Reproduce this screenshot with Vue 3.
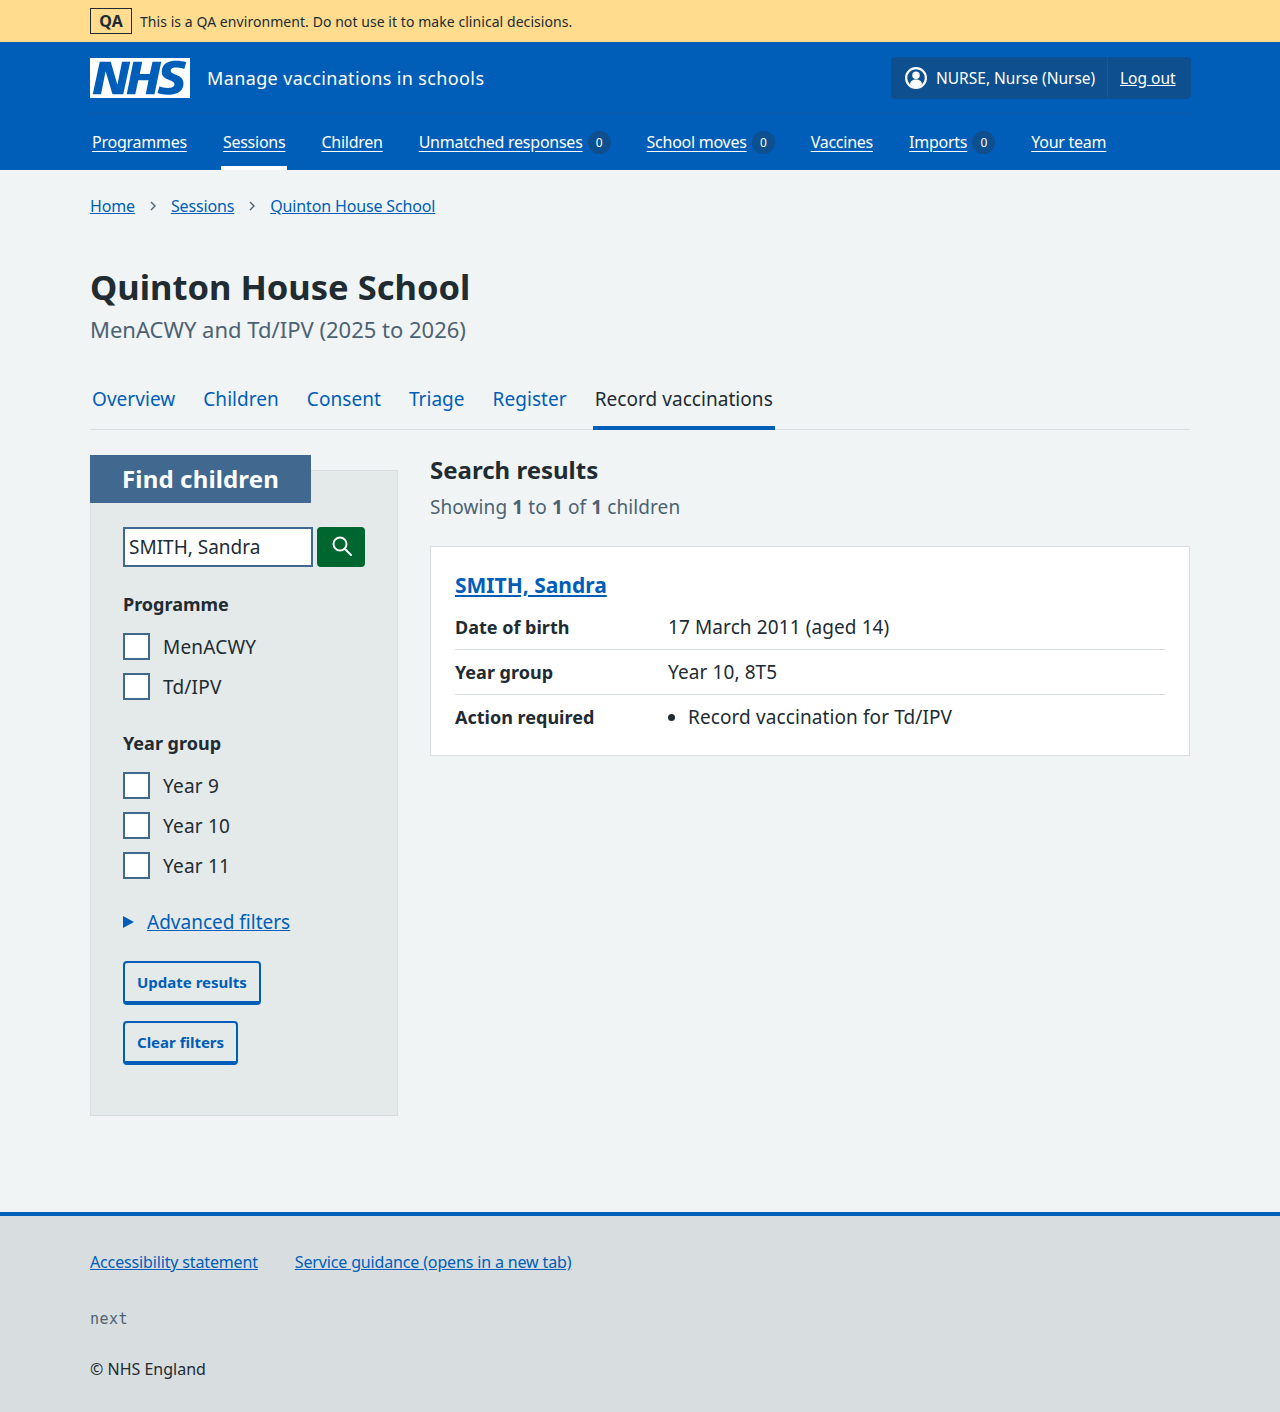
<template>
  <div class="qa-bar">
    <div class="wrap qa-inner">
      <strong class="qa-tag">QA</strong>
      <span>This is a QA environment. Do not use it to make clinical decisions.</span>
    </div>
  </div>

  <header class="header">
    <div class="wrap">
      <div class="header-top">
        <a class="logo-link" href="#">
          <svg class="logo" viewBox="0 0 40 16" aria-label="NHS">
            <path fill="#fff" d="M0 0h40v16H0z" />
            <path fill="#005eb8" d="M3.9 1.5h4.4l2.6 9h.1l1.8-9h3.3l-2.8 13H9l-2.7-9h-.1l-1.8 9H1.1M17.3 1.5h3.6l-1 4.9h4L25 1.5h3.5l-2.7 13h-3.5l1.1-5.6h-4.1l-1.2 5.6h-3.4M37.7 4.4c-.7-.3-1.6-.6-2.9-.6-1.4 0-2.5.2-2.5 1.3 0 1.8 5.1 1.2 5.1 5.1 0 3.6-3.3 4.5-6.4 4.5-1.3 0-2.9-.3-4-.7l.8-2.7c.7.4 2.1.7 3.2.7s2.8-.2 2.8-1.5c0-2.1-5.1-1.3-5.1-5 0-3.4 2.9-4.4 5.8-4.4 1.6 0 3.1.2 4 .6" />
          </svg>
          <span class="service">Manage vaccinations in schools</span>
        </a>
        <div class="account">
          <div class="account-user">
            <svg class="user-icon" viewBox="0 0 20 20">
              <circle cx="10" cy="10" r="9" fill="none" stroke="#fff" stroke-width="2" />
              <circle cx="10" cy="7.6" r="3.4" fill="#fff" />
              <path fill="#fff" d="M4.6 16c0-3.200 2.400-4.600 5.400-4.600s5.400 1.400 5.400 4.600c-1.400 1.500-3.300 2.400-5.400 2.400S6 17.500 4.600 16z" />
            </svg>
            <span>NURSE, Nurse (Nurse)</span>
          </div>
          <a class="logout" href="#">Log out</a>
        </div>
      </div>
      <nav class="main-nav">
        <a v-for="item in navItems" :key="item.label" href="#" class="nav-item" :class="{ current: item.current }">
          <span class="nav-label">{{ item.label }}</span>
          <span v-if="item.count !== undefined" class="count">{{ item.count }}</span>
        </a>
      </nav>
    </div>
  </header>

  <div class="wrap">
    <nav class="breadcrumb">
      <template v-for="(crumb, i) in crumbs" :key="crumb">
        <a href="#">{{ crumb }}</a>
        <svg v-if="i < crumbs.length - 1" class="chevron" viewBox="0 0 8 12">
          <path d="M2 2l4 4-4 4" fill="none" stroke="#4c6272" stroke-width="1.400" />
        </svg>
      </template>
    </nav>

    <main>
      <h1 class="title">Quinton House School</h1>
      <p class="subtitle">MenACWY and Td/IPV (2025 to 2026)</p>

      <div class="tabs">
        <a v-for="tab in tabs" :key="tab" href="#" class="tab" :class="{ active: tab === 'Record vaccinations' }">{{ tab }}</a>
      </div>

      <div class="columns">
        <aside class="filters">
          <h2 class="filters-head">Find children</h2>
          <div class="filters-body">
            <div class="search">
              <input class="search-input" type="text" value="SMITH, Sandra" />
              <button class="search-btn" aria-label="Search">
                <svg viewBox="0 0 20 20" width="20" height="20">
                  <circle cx="8" cy="8" r="6.500" fill="none" stroke="#fff" stroke-width="2" />
                  <path d="M13 13l6 6" fill="none" stroke="#fff" stroke-width="2" stroke-linecap="round" />
                </svg>
              </button>
            </div>

            <fieldset v-for="group in groups" :key="group.legend" class="group">
              <legend class="legend">{{ group.legend }}</legend>
              <label v-for="opt in group.options" :key="opt" class="check">
                <span class="box"></span>
                <span>{{ opt }}</span>
              </label>
            </fieldset>

            <div class="advanced">
              <span class="triangle"></span>
              <a href="#">Advanced filters</a>
            </div>

            <button class="btn">Update results</button>
            <button class="btn">Clear filters</button>
          </div>
        </aside>

        <section class="results">
          <h2 class="results-head">Search results</h2>
          <p class="showing">Showing <b>1</b> to <b>1</b> of <b>1</b> children</p>
          <div class="card">
            <h3 class="card-title"><a href="#">SMITH, Sandra</a></h3>
            <dl class="rows">
              <div class="row">
                <dt>Date of birth</dt>
                <dd>17 March 2011 (aged 14)</dd>
              </div>
              <div class="row">
                <dt>Year group</dt>
                <dd>Year 10, 8T5</dd>
              </div>
              <div class="row last">
                <dt>Action required</dt>
                <dd>
                  <ul>
                    <li>Record vaccination for Td/IPV</li>
                  </ul>
                </dd>
              </div>
            </dl>
          </div>
        </section>
      </div>
    </main>
  </div>

  <footer class="footer">
    <div class="wrap">
      <div class="footer-links">
        <a href="#">Accessibility statement</a>
        <a href="#">Service guidance (opens in a new tab)</a>
      </div>
      <p class="version">next</p>
      <p class="copy">© NHS England</p>
    </div>
  </footer>
</template>

<script setup>
const navItems = [
  { label: 'Programmes' },
  { label: 'Sessions', current: true },
  { label: 'Children' },
  { label: 'Unmatched responses', count: 0 },
  { label: 'School moves', count: 0 },
  { label: 'Vaccines' },
  { label: 'Imports', count: 0 },
  { label: 'Your team' }
]

const crumbs = ['Home', 'Sessions', 'Quinton House School']
const tabs = ['Overview', 'Children', 'Consent', 'Triage', 'Register', 'Record vaccinations']

const groups = [
  { legend: 'Programme', options: ['MenACWY', 'Td/IPV'] },
  { legend: 'Year group', options: ['Year 9', 'Year 10', 'Year 11'] }
]
</script>

<style>
body {
  background: #f0f4f5;
}
</style>

<style scoped>
.wrap {
  width: 1100px;
  margin: 0 auto;
  font-family: "Noto Sans", sans-serif;
  color: #212b32;
}

a {
  color: #005eb8;
}

.qa-bar {
  height: 42px;
  background: #ffdc8e;
}

.qa-inner {
  display: flex;
  align-items: center;
  gap: 8px;
  height: 42px;
  font-size: 14px;
  letter-spacing: 0.06px;
}

.qa-tag {
  display: block;
  box-sizing: border-box;
  width: 42px;
  height: 26px;
  border: 1px solid #212b32;
  text-align: center;
  line-height: 24px;
  font-size: 16px;
}

.header {
  background: #005eb8;
  height: 128px;
}

.header-top {
  display: flex;
  justify-content: space-between;
  align-items: flex-start;
  height: 72px;
  padding-top: 15px;
  border-bottom: 1px solid #0f5cab;
  box-sizing: border-box;
}

.logo-link {
  display: flex;
  align-items: center;
  gap: 17px;
  margin-top: 1px;
  color: #fff;
  text-decoration: none;
}

.logo {
  display: block;
  width: 100px;
  height: 40px;
}

.service {
  font-size: 18px;
  letter-spacing: 0.37px;
}

.account {
  display: flex;
  align-items: stretch;
  width: 300px;
  height: 42px;
  margin-right: -1px;
  background: #0d4f8f;
  border-radius: 4px;
  font-size: 15.500px;
  color: #fff;
  white-space: nowrap;
}

.account-user {
  display: flex;
  align-items: center;
  gap: 9px;
  width: 217px;
  box-sizing: border-box;
  padding-left: 14px;
  border-right: 1px solid #005eb8;
}

.user-icon {
  width: 22px;
  height: 22px;
}

.logout {
  display: flex;
  align-items: center;
  padding: 0 12px;
  color: #fff;
}

.main-nav {
  display: flex;
  height: 56px;
  margin-left: 2px;
  gap: 36px;
  font-size: 16px;
  letter-spacing: -0.25px;
}

.nav-item {
  position: relative;
  display: flex;
  align-items: center;
  gap: 5px;
  height: 56px;
  color: #fff;
  text-decoration: none;
}

.nav-label {
  text-decoration: underline;
  text-underline-offset: 3px;
}

.nav-item.current::after {
  content: "";
  position: absolute;
  left: -2px;
  right: -2px;
  bottom: 0;
  height: 4px;
  background: #fff;
}

.count {
  display: block;
  width: 23px;
  height: 23px;
  border-radius: 50%;
  background: #0d4f8f;
  text-align: center;
  line-height: 23px;
  font-size: 12px;
}

.breadcrumb {
  display: flex;
  align-items: center;
  height: 72px;
  font-size: 16px;
  letter-spacing: -0.15px;
}

.chevron {
  width: 8px;
  height: 12px;
  margin: 0 14px;
}

.title {
  margin: 24px 0 0;
  font-size: 34.500px;
  line-height: 42px;
  font-weight: 700;
}

.subtitle {
  margin: 6px 0 0;
  font-size: 22px;
  line-height: 30px;
  color: #4c6272;
}

.tabs {
  display: flex;
  gap: 24px;
  margin-top: 27px;
  height: 59px;
  border-bottom: 1px solid #d8dde0;
  box-sizing: border-box;
}

.tab {
  display: block;
  padding: 14px 2px 0;
  font-size: 19px;
  line-height: 28px;
  letter-spacing: 0.05px;
  text-decoration: none;
  height: 59px;
  box-sizing: border-box;
}

.tab.active {
  color: #212b32;
  border-bottom: 4px solid #005eb8;
}

.columns {
  display: flex;
  gap: 32px;
  align-items: flex-start;
  margin-top: 25px;
}

.filters {
  width: 308px;
  flex: none;
}

.filters-head {
  position: relative;
  width: 221px;
  height: 48px;
  margin: 0;
  box-sizing: border-box;
  padding-left: 32px;
  background: #41698f;
  color: #fff;
  font-size: 24px;
  line-height: 47px;
  font-weight: 700;
  letter-spacing: 0.15px;
}

.filters-body {
  margin-top: -33px;
  height: 646px;
  box-sizing: border-box;
  padding: 56px 32px 0;
  background: #e4e9ea;
  border: 1px solid #d8dde0;
}

.search {
  display: flex;
  gap: 4px;
}

.search-input {
  width: 190px;
  height: 40px;
  box-sizing: border-box;
  padding: 0 4px;
  border: 2px solid #41698f;
  background: #fff;
  font: 19px "Noto Sans", sans-serif;
  color: #212b32;
  outline: none;
}

.search-btn {
  display: flex;
  align-items: center;
  justify-content: center;
  width: 48px;
  height: 40px;
  padding: 0 0 2px 2px;
  border: 0;
  border-radius: 4px;
  background: #00662f;
}

.group {
  margin: 23px 0 0;
  padding: 0;
  border: 0;
}

.group + .group {
  margin-top: 16px;
}

.legend {
  padding: 0;
  margin-bottom: 15px;
  font-size: 18px;
  line-height: 28px;
  font-weight: 700;
}

.check {
  display: flex;
  align-items: center;
  gap: 13px;
  height: 27px;
  margin-bottom: 13px;
  font-size: 19px;
  letter-spacing: 0.2px;
}

.box {
  display: block;
  width: 27px;
  height: 27px;
  box-sizing: border-box;
  background: #fff;
  border: 2px solid #41698f;
}

.advanced {
  display: flex;
  align-items: center;
  gap: 13px;
  margin-top: 16px;
  font-size: 19px;
  line-height: 28px;
}

.triangle {
  display: block;
  width: 0;
  height: 0;
  border-left: 11px solid #005eb8;
  border-top: 6.500px solid transparent;
  border-bottom: 6.500px solid transparent;
}

.btn {
  display: block;
  height: 44px;
  padding: 0 12px;
  margin-top: 16px;
  border: 2px solid #005eb8;
  border-bottom-width: 4px;
  border-radius: 4px;
  background: transparent;
  color: #005eb8;
  font: 700 15px "Noto Sans", sans-serif;
}

.advanced + .btn {
  margin-top: 25px;
}

.results {
  flex: 1;
  min-width: 0;
  margin-top: -1px;
}

.results-head {
  margin: 0;
  font-size: 24px;
  line-height: 32px;
  font-weight: 700;
}

.showing {
  margin: 7px 0 0;
  font-size: 19px;
  line-height: 28px;
  letter-spacing: 0.1px;
  color: #4c6272;
}

.card {
  margin-top: 25px;
  padding: 23px 24px 0;
  background: #fff;
  border: 1px solid #d8dde0;
  height: 210px;
  box-sizing: border-box;
}

.card-title {
  margin: 0 0 5px;
  font-size: 21px;
  line-height: 30px;
  font-weight: 700;
}

.rows {
  margin: 0;
}

.row {
  display: flex;
  height: 45px;
  align-items: center;
  font-size: 19px;
  letter-spacing: 0.1px;
  border-bottom: 1px solid #d8dde0;
  box-sizing: border-box;
}

.row.last {
  height: 43px;
  border-bottom: 0;
}

.row dt {
  width: 213px;
  font-size: 18px;
  font-weight: 700;
  letter-spacing: 0;
}

.row dd {
  margin: 0;
}

.row ul {
  margin: 0;
  padding-left: 20px;
}

.footer {
  margin-top: 96px;
  height: 200px;
  box-sizing: border-box;
  background: #d8dde0;
  border-top: 4px solid #005eb8;
}

.footer-links {
  display: flex;
  gap: 37px;
  padding-top: 36px;
  font-size: 16px;
  line-height: 20px;
  letter-spacing: -0.15px;
}

.version {
  margin: 37px 0 0;
  font-family: "DejaVu Sans Mono", monospace;
  font-size: 15px;
  line-height: 20px;
  letter-spacing: 0.5px;
  color: #4c6272;
}

.copy {
  margin: 30px 0 0;
  font-size: 16px;
  line-height: 20px;
}
</style>
